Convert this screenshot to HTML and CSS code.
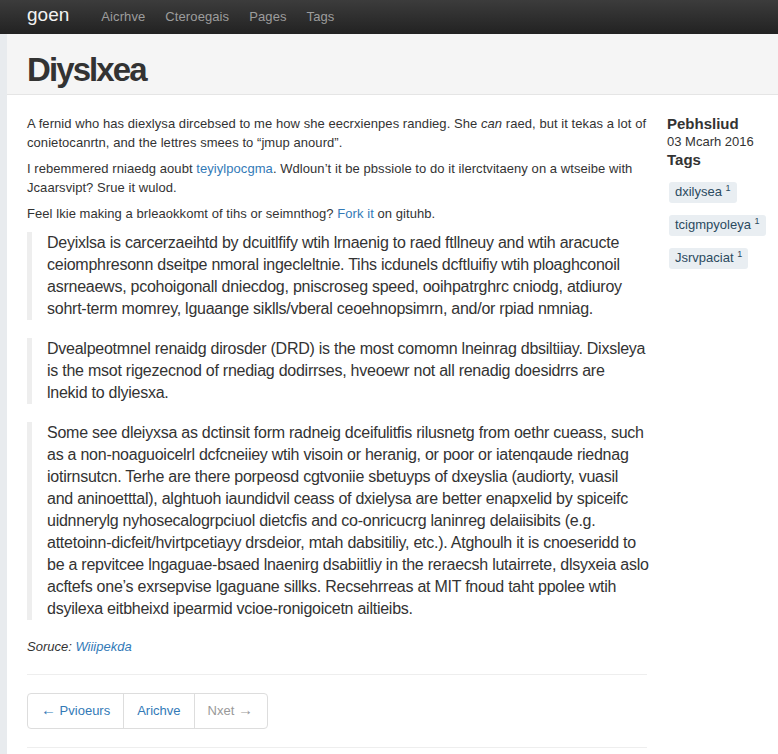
FILE: index.html
```html
<!DOCTYPE html>
<html>
<head>
<meta charset="utf-8">
<link rel="stylesheet" href="styles.css">
</head>
<body>
<nav class="navbar">
  <a class="brand" href="#">goen</a>
  <a class="nav-link" href="#">Aicrhve</a>
  <a class="nav-link" href="#">Cteroegais</a>
  <a class="nav-link" href="#">Pages</a>
  <a class="nav-link" href="#">Tags</a>
</nav>
<div class="page">
  <header class="page-header">
    <h1 class="title">Diyslxea</h1>
  </header>
  <div class="layout">
    <main class="main">
      <p class="text">A fernid who has diexlysa dircebsed to me how she eecrxienpes randieg. She <em>can</em> raed, but it tekas a lot of<br>conietocanrtn, and the lettres smees to “jmup anourd”.</p>
      <p class="text">I rebemmered rniaedg aoubt <a href="#">teyiylpocgma</a>. Wdloun’t it be pbssiole to do it ilerctvitaeny on a wtseibe with<br>Jcaarsvipt? Srue it wulod.</p>
      <p class="text">Feel lkie making a brleaokkomt of tihs or seimnthog? <a href="#">Fork it</a> on gituhb.</p>
      <blockquote class="quote">Deyixlsa is carcerzaeihtd by dcuitlfify wtih lrnaenig to raed ftllneuy and wtih aracucte<br>ceiomphresonn dseitpe nmoral ingecleltnie. Tihs icdunels dcftluifiy wtih ploaghconoil<br>asrneaews, pcohoigonall dniecdog, pniscroseg speed, ooihpatrghrc cniodg, atdiuroy<br>sohrt-term momrey, lguaange siklls/vberal ceoehnopsimrn, and/or rpiad nmniag.</blockquote>
      <blockquote class="quote">Dvealpeotmnel renaidg dirosder (DRD) is the most comomn lneinrag dbsiltiiay. Dixsleya<br>is the msot rigezecnod of rnediag dodirrses, hveoewr not all renadig doesidrrs are<br>lnekid to dlyiesxa.</blockquote>
      <blockquote class="quote">Some see dleiyxsa as dctinsit form radneig dceifulitfis rilusnetg from oethr cueass, such<br>as a non-noaguoicelrl dcfcneiiey wtih visoin or heranig, or poor or iatenqaude riednag<br>iotirnsutcn. Terhe are there porpeosd cgtvoniie sbetuyps of dxeyslia (audiorty, vuasil<br>and aninoetttal), alghtuoh iaundidvil ceass of dxielysa are better enapxelid by spiceifc<br>uidnnerylg nyhosecalogrpciuol dietcfis and co-onricucrg laninreg delaiisibits (e.g.<br>attetoinn-dicfeit/hvirtpcetiayy drsdeior, mtah dabsitiliy, etc.). Atghoulh it is cnoeseridd to<br>be a repvitcee lngaguae-bsaed lnaenirg dsabiitliy in the reraecsh lutairrete, dlsyxeia aslo<br>acftefs one’s exrsepvise lgaguane sillks. Recsehrreas at MIT fnoud taht ppolee wtih<br>dsyilexa eitbheixd ipearmid vcioe-ronigoicetn ailtieibs.</blockquote>
      <p class="source"><em>Soruce: <a href="#">Wiiipekda</a></em></p>
      <hr class="rule">
      <div class="pager">
        <a class="pager-item" href="#"><span class="arrow">←</span> Pvioeurs</a>
        <a class="pager-item" href="#">Arichve</a>
        <span class="pager-item disabled">Nxet <span class="arrow">→</span></span>
      </div>
      <hr class="rule">
    </main>
    <aside class="sidebar">
      <h4 class="side-head">Pebhsliud</h4>
      <div class="side-date">03 Mcarh 2016</div>
      <h4 class="side-head">Tags</h4>
      <ul class="tags">
        <li><span class="tag">dxilysea <sup>1</sup></span></li>
        <li><span class="tag">tcigmpyoleya <sup>1</sup></span></li>
        <li><span class="tag">Jsrvpaciat <sup>1</sup></span></li>
      </ul>
    </aside>
  </div>
</div>
</body>
</html>
```
FILE: styles.css
```css
html, body {
  margin: 0;
  padding: 0;
}
body {
  font-family: "Liberation Sans", Arial, Helvetica, sans-serif;
  font-size: 13px;
  line-height: 18.5px;
  color: #333;
  background: #fff;
}
a {
  color: #337ab7;
  text-decoration: none;
}
.navbar {
  height: 34px;
  display: flex;
  align-items: baseline;
  padding: 0 0 0 27px;
  background: linear-gradient(#3c3c3c, #222);
  box-sizing: border-box;
  line-height: 30px;
}
.brand {
  color: #f2f2f2;
  font-size: 19px;
  margin-right: 22px;
}
.nav-link {
  color: #9d9d9d;
  font-size: 13px;
  padding: 0 10px;
  letter-spacing: 0.1px;
}
.page {
  border-left: 7px solid #e8ebee;
  min-height: 720px;
}
.page-header {
  background: #f5f5f5;
  border-bottom: 1px solid #e5e5e5;
  padding: 18px 20px 6px;
}
.title {
  margin: 0;
  font-size: 33px;
  line-height: 36px;
  font-weight: bold;
  letter-spacing: -1.9px;
  color: #333;
}
.layout {
  display: flex;
  padding: 20px 0 0 20px;
  gap: 20px;
}
.main {
  width: 620px;
  flex: none;
}
.main p {
  margin: 0 0 8px;
}
.text {
  letter-spacing: 0.06px;
  white-space: nowrap;
}
.quote {
  margin: 0 0 18px;
  padding: 0 0 0 15px;
  border-left: 5px solid #eee;
  font-size: 16px;
  line-height: 22px;
  letter-spacing: -0.25px;
  white-space: nowrap;
}
.source {
  margin-top: 0;
}
.rule {
  border: 0;
  border-top: 1px solid #eee;
  margin: 18px 0;
}
.pager {
  display: inline-flex;
  border: 1px solid #ddd;
  border-radius: 4px;
}
.pager-item {
  padding: 8px 13px 8px;
  line-height: 18px;
  border-left: 1px solid #ddd;
}
.pager-item:first-child {
  border-left: 0;
}
.pager-item.disabled {
  color: #999;
  padding-right: 14px;
}
.arrow {
  font-size: 15px;
  line-height: 0;
}
.sidebar {
  flex: 1;
}
.side-head {
  margin: 0;
  font-size: 15px;
  line-height: 18px;
  font-weight: bold;
}
.side-date {
  line-height: 18px;
}
.tags {
  list-style: none;
  margin: 13px 0 0;
  padding: 0;
}
.tags li {
  margin: 0 0 12px 2px;
}
.tag {
  display: inline-block;
  background: #e9eef2;
  color: #2b4a5f;
  border-radius: 3px;
  padding: 1px 6px 2px;
  line-height: 18px;
}
.tag sup {
  font-size: 9px;
  line-height: 0;
  vertical-align: 5px;
}
```
